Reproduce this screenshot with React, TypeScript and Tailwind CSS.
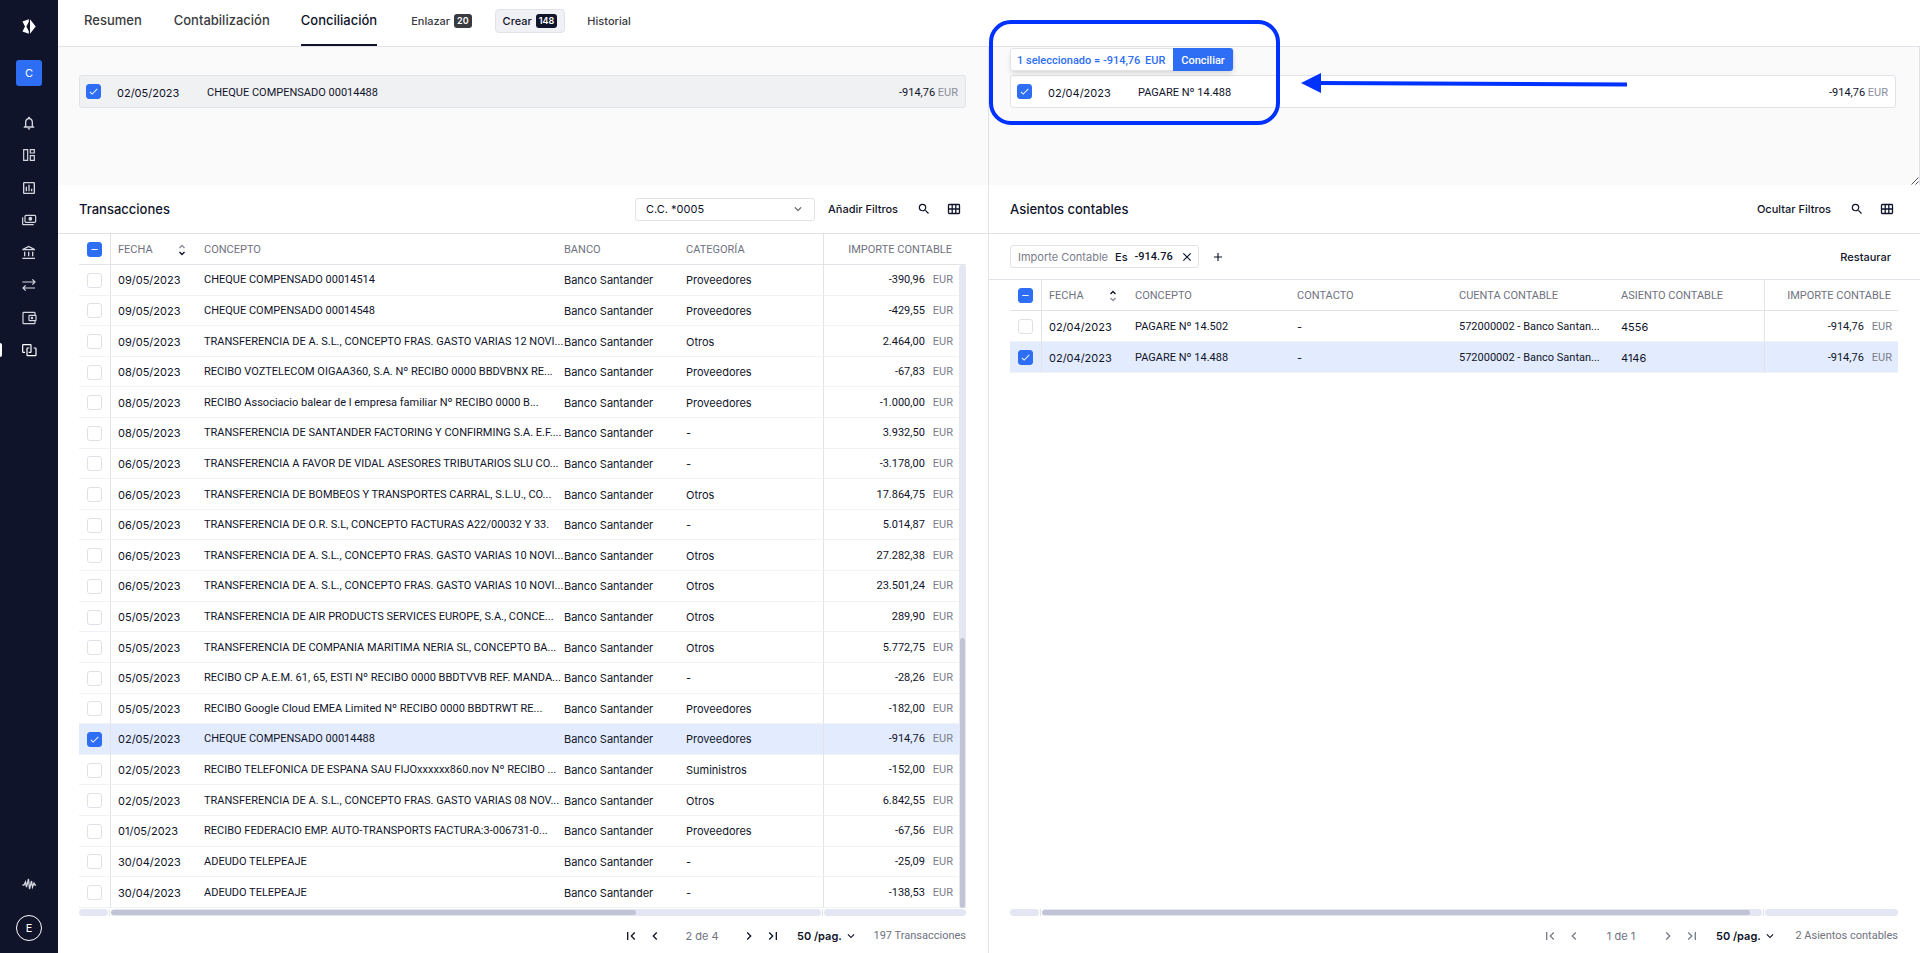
import type { ReactNode } from "react";
import {
  MdCheck,
  MdChevronLeft,
  MdChevronRight,
  MdClose,
  MdExpandMore,
  MdFirstPage,
  MdLastPage,
  MdNotificationsNone,
  MdOutlineAccountBalance,
  MdOutlineAssessment,
  MdAdd,
  MdRemove,
  MdSearch,
} from "react-icons/md";

type Transaction = {
  date: string;
  concept: string;
  category: string;
  amount: string;
  selected?: boolean;
};

const transactions: Transaction[] = [
  { date: "09/05/2023", concept: "CHEQUE COMPENSADO 00014514", category: "Proveedores", amount: "-390,96" },
  { date: "09/05/2023", concept: "CHEQUE COMPENSADO 00014548", category: "Proveedores", amount: "-429,55" },
  { date: "09/05/2023", concept: "TRANSFERENCIA DE A. S.L., CONCEPTO FRAS. GASTO VARIAS 12 NOVI...", category: "Otros", amount: "2.464,00" },
  { date: "08/05/2023", concept: "RECIBO VOZTELECOM OIGAA360, S.A. Nº RECIBO 0000 BBDVBNX RE...", category: "Proveedores", amount: "-67,83" },
  { date: "08/05/2023", concept: "RECIBO Associacio balear de l empresa familiar Nº RECIBO 0000 B...", category: "Proveedores", amount: "-1.000,00" },
  { date: "08/05/2023", concept: "TRANSFERENCIA DE SANTANDER FACTORING Y CONFIRMING S.A. E.F....", category: "-", amount: "3.932,50" },
  { date: "06/05/2023", concept: "TRANSFERENCIA A FAVOR DE VIDAL ASESORES TRIBUTARIOS SLU CO...", category: "-", amount: "-3.178,00" },
  { date: "06/05/2023", concept: "TRANSFERENCIA DE BOMBEOS Y TRANSPORTES CARRAL, S.L.U., CO...", category: "Otros", amount: "17.864,75" },
  { date: "06/05/2023", concept: "TRANSFERENCIA DE O.R. S.L, CONCEPTO FACTURAS A22/00032 Y 33.", category: "-", amount: "5.014,87" },
  { date: "06/05/2023", concept: "TRANSFERENCIA DE A. S.L., CONCEPTO FRAS. GASTO VARIAS 10 NOVI...", category: "Otros", amount: "27.282,38" },
  { date: "06/05/2023", concept: "TRANSFERENCIA DE A. S.L., CONCEPTO FRAS. GASTO VARIAS 10 NOVI...", category: "Otros", amount: "23.501,24" },
  { date: "05/05/2023", concept: "TRANSFERENCIA DE AIR PRODUCTS SERVICES EUROPE, S.A., CONCE...", category: "Otros", amount: "289,90" },
  { date: "05/05/2023", concept: "TRANSFERENCIA DE COMPANIA MARITIMA NERIA SL, CONCEPTO BA...", category: "Otros", amount: "5.772,75" },
  { date: "05/05/2023", concept: "RECIBO CP A.E.M. 61, 65, ESTI Nº RECIBO 0000 BBDTVVB REF. MANDA...", category: "-", amount: "-28,26" },
  { date: "05/05/2023", concept: "RECIBO Google Cloud EMEA Limited Nº RECIBO 0000 BBDTRWT RE...", category: "Proveedores", amount: "-182,00" },
  { date: "02/05/2023", concept: "CHEQUE COMPENSADO 00014488", category: "Proveedores", amount: "-914,76", selected: true },
  { date: "02/05/2023", concept: "RECIBO TELEFONICA DE ESPANA SAU FIJOxxxxxx860.nov Nº RECIBO ...", category: "Suministros", amount: "-152,00" },
  { date: "02/05/2023", concept: "TRANSFERENCIA DE A. S.L., CONCEPTO FRAS. GASTO VARIAS 08 NOV...", category: "Otros", amount: "6.842,55" },
  { date: "01/05/2023", concept: "RECIBO FEDERACIO EMP. AUTO-TRANSPORTS FACTURA:3-006731-0...", category: "Proveedores", amount: "-67,56" },
  { date: "30/04/2023", concept: "ADEUDO TELEPEAJE", category: "-", amount: "-25,09" },
  { date: "30/04/2023", concept: "ADEUDO TELEPEAJE", category: "-", amount: "-138,53" },
];

const entries = [
  { concept: "PAGARE Nº 14.502", entry: "4556", selected: false },
  { concept: "PAGARE Nº 14.488", entry: "4146", selected: true },
];

// Roboto sets capitals and figures narrower than Inter, so the dense columns use it
const dense = "font-['Roboto','Liberation_Sans',sans-serif]";
const th = `${dense} border-b border-[#e2e3e8] pt-0.5 pl-[7px] text-left font-normal text-[#6f7280]`;
const thCheck = "border-r border-b border-[#e2e3e8] pl-2";
const thAmount = `${dense} border-b border-l border-[#e2e3e8] pt-0.5 text-right font-normal text-[#6f7280]`;
const td = "border-b border-[#f1f2f5] pt-px pl-[7px] whitespace-nowrap";
const tdCheck = "border-r border-b border-r-[#e2e3e8] border-b-[#f1f2f5] pt-px pl-2";

function NavIcon({ children }: { children: ReactNode }) {
  return (
    <svg viewBox="0 0 24 24" className="h-4 w-4" fill="none" stroke="currentColor" strokeWidth="1.800">
      {children}
    </svg>
  );
}

function DashboardIcon() {
  return (
    <NavIcon>
      <path d="M4 4h6v16H4zM14 4h6v5h-6zM14 13h6v7h-6z" />
    </NavIcon>
  );
}

function PaymentsIcon() {
  return (
    <NavIcon>
      <rect x="6" y="5" width="16" height="10.500" rx="1.500" />
      <circle cx="14" cy="10.200" r="2" fill="currentColor" />
      <path d="M2.500 8v10a1 1 0 0 0 1 1H19" />
    </NavIcon>
  );
}

function SwapIcon() {
  return (
    <NavIcon>
      <path d="M2 7.500h18M17 3.500l4 4-4 4M21 16.500H4M7 12.500l-4 4 4 4" />
    </NavIcon>
  );
}

function WalletIcon() {
  return (
    <NavIcon>
      <path d="M21 8V4.500a1 1 0 0 0-1-1H4a1 1 0 0 0-1 1v15a1 1 0 0 0 1 1h16a1 1 0 0 0 1-1V16" />
      <rect x="12" y="8" width="10.500" height="8" rx="1" />
      <circle cx="16.500" cy="12" r="1" />
    </NavIcon>
  );
}

function ReconcileIcon() {
  return (
    <NavIcon>
      <path d="M6 15.500H3.500a1 1 0 0 1-1-1V5a1 1 0 0 1 1-1H14a1 1 0 0 1 1 1v9.500a1 1 0 0 1-1 1h-2.500" />
      <path d="M12.500 9H10a1 1 0 0 0-1 1v9.500a1 1 0 0 0 1 1h11.500a1 1 0 0 0 1-1V10a1 1 0 0 0-1-1H19" />
    </NavIcon>
  );
}

function TableIcon() {
  return (
    <svg viewBox="0 0 14 12" className="h-3 w-3.5" fill="none" stroke="currentColor" strokeWidth="1.300">
      <rect x="1.500" y="1.500" width="11" height="9" rx="0.800" />
      <path d="M1.500 6h11M5.200 1.500v9M8.800 1.500v9" />
    </svg>
  );
}

function SortIcon({ ascending }: { ascending?: boolean }) {
  return (
    <svg viewBox="0 0 8 12" className="mr-[11px] h-3 w-2" fill="none" strokeWidth="1.400">
      <path d="M1.500 4L4 1.500 6.500 4" className={ascending ? "stroke-[#10142a]" : "stroke-[#8a8d9a]"} />
      <path d="M1.500 8L4 10.500 6.500 8" className={ascending ? "stroke-[#8a8d9a]" : "stroke-[#10142a]"} />
    </svg>
  );
}

function Checkbox({ label, checked, mixed }: { label: string; checked?: boolean; mixed?: boolean }) {
  const on = checked || mixed;
  return (
    <span className="relative block h-[15px] w-[15px]">
      <input
        type="checkbox"
        aria-label={label}
        defaultChecked={on}
        className="block h-[15px] w-[15px] appearance-none rounded-[3px] border border-[#dfe1e7] bg-white checked:border-[#2d6ef5] checked:bg-[#2d6ef5]"
      />
      {checked && <MdCheck className="pointer-events-none absolute inset-0.5 h-[11px] w-[11px] text-white" />}
      {mixed && <MdRemove className="pointer-events-none absolute inset-0.5 h-[11px] w-[11px] text-white" />}
    </span>
  );
}

function Sidebar() {
  return (
    <aside className="flex w-[58px] shrink-0 flex-col items-center bg-[#10142a] pt-[19px] pb-3 text-[#d5d7e0]">
      <svg viewBox="0 0 14 15" className="h-[15px] w-3.5 fill-white">
        <path d="M8 0.300L13.700 7.500 8 14.700z" />
        <path d="M6.800 0.300v2.400L4.400 7.500l2.400 4.800v2.400L0.500 12.600 3 7.500 0.500 2.400z" />
      </svg>
      <button className="mt-[26px] h-[26px] w-[26px] rounded-[3px] bg-[#2d6ef5] text-[11px] text-white">C</button>
      <nav className="mt-[29px] flex h-[243px] w-full flex-col items-center justify-between">
        <a href="#avisos" aria-label="Avisos"><MdNotificationsNone className="h-4 w-4" /></a>
        <a href="#panel" aria-label="Panel"><DashboardIcon /></a>
        <a href="#informes" aria-label="Informes"><MdOutlineAssessment className="h-4 w-4" /></a>
        <a href="#pagos" aria-label="Pagos"><PaymentsIcon /></a>
        <a href="#bancos" aria-label="Bancos"><MdOutlineAccountBalance className="h-4 w-4" /></a>
        <a href="#movimientos" aria-label="Movimientos"><SwapIcon /></a>
        <a href="#cartera" aria-label="Cartera"><WalletIcon /></a>
        <a href="#conciliacion" aria-label="Conciliación" className="flex w-full items-center text-white">
          <span className="h-3.5 w-0.5 rounded-r bg-white" />
          <span className="ml-[19px]"><ReconcileIcon /></span>
        </a>
      </nav>
      <a href="#actividad" aria-label="Actividad" className="mt-auto">
        <svg viewBox="0 0 14 12" className="h-3 w-3.5" fill="none" stroke="currentColor" strokeWidth="1.300">
          <path d="M0.500 7h1.500l1.500-3 1 5 2-8 1 10 2-8 1 6 1.500-4 1 2h1" />
        </svg>
      </a>
      <button className="mt-[25px] h-[26px] w-[26px] rounded-full border border-white text-[11px] text-white">E</button>
    </aside>
  );
}

function Header() {
  return (
    <header className="flex h-[47px] shrink-0 items-stretch border-b border-[#e2e3e8] pl-[26px] text-[13px] font-medium text-[#3a3b40]">
      <a href="#resumen" className="mr-8 pt-3">Resumen</a>
      <a href="#contabilizacion" className="mr-[31px] pt-3">Contabilización</a>
      <a href="#conciliacion" className="mr-[27px] border-b-2 border-[#10142a] pt-3 text-[#10142a]">
        Conciliación
      </a>
      <div className="flex h-[42px] items-center text-[11px]">
        <a href="#enlazar" className="flex h-6 items-center gap-1 px-[7px]">
          Enlazar
          <span className="rounded-[3px] bg-[#3a3b40] px-[3px] text-[9px] leading-[14px] font-semibold text-white">20</span>
        </a>
        <a
          href="#crear"
          className="ml-4 flex h-6 items-center gap-1 rounded border border-[#e2e3e8] bg-[#f0f1f4] px-[7px] text-[#10142a]"
        >
          Crear
          <span className="rounded-[3px] bg-[#10142a] px-[3px] text-[9px] leading-[14px] font-semibold text-white">148</span>
        </a>
        <a href="#historial" className="ml-[15px] px-[7px]">Historial</a>
      </div>
    </header>
  );
}

function SelectedCard({ date, concept, className }: { date: string; concept: string; className: string }) {
  return (
    <div className={`flex h-[33px] items-center rounded-[3px] border border-[#e2e3e8] pr-[7px] pl-1.5 ${className}`}>
      <Checkbox label={concept} checked />
      <span className="ml-4 w-[90px] pt-0.5">{date}</span>
      <span className={`flex-1 pt-0.5 ${dense}`}>{concept}</span>
      <span className={`pt-0.5 ${dense}`}>
        -914,76 <span className="text-[#8a8d9a]">EUR</span>
      </span>
    </div>
  );
}

function Amount({ value }: { value: string }) {
  return (
    <>
      {value}
      <span className="ml-2 text-[#7a7d8a]">EUR</span>
    </>
  );
}

function Toolbar() {
  return (
    <>
      <button aria-label="Buscar" className="ml-[19px]"><MdSearch className="h-3.5 w-3.5" /></button>
      <button aria-label="Columnas" className="ml-4"><TableIcon /></button>
    </>
  );
}

function ScrollTrack({ thumb, last }: { thumb: string; last: string }) {
  return (
    <div className="mt-px flex h-[7px] shrink-0 gap-px">
      <div className="w-[29px] rounded-full bg-[#e4e6f3]" />
      <div className="w-px bg-[#e2e3e8]" />
      <div className="flex-1 rounded-full bg-[#e4e6f3] py-px">
        <div className={`h-full rounded-full bg-[#c0c4d4] ${thumb}`} />
      </div>
      <div className="w-px bg-[#e2e3e8]" />
      <div className={`rounded-full bg-[#e4e6f3] ${last}`} />
    </div>
  );
}

function Pager({ page, total, totalWidth, disabled }: { page: string; total: string; totalWidth: string; disabled?: boolean }) {
  return (
    <div className="flex h-[37px] shrink-0 items-center justify-end pt-0.5">
      <div className={`flex items-center ${disabled ? "text-[#7a7d8a]" : ""}`}>
        <button aria-label="Primera página" disabled={disabled}><MdFirstPage className="h-4 w-4" /></button>
        <button aria-label="Página anterior" disabled={disabled} className="ml-2"><MdChevronLeft className="h-4 w-4" /></button>
        <span className="w-[78px] text-center text-[#6f7280]">{page}</span>
        <button aria-label="Página siguiente" disabled={disabled}><MdChevronRight className="h-4 w-4" /></button>
        <button aria-label="Última página" disabled={disabled} className="ml-2"><MdLastPage className="h-4 w-4" /></button>
      </div>
      <div className="relative ml-4 flex items-center">
        <select aria-label="Filas por página" className="w-[61px] appearance-none bg-transparent font-semibold">
          <option>50 /pag.</option>
        </select>
        <MdExpandMore className="pointer-events-none absolute right-0 h-3.5 w-3.5" />
      </div>
      <span className={`text-right whitespace-nowrap text-[#6f7280] ${dense} ${totalWidth}`}>{total}</span>
    </div>
  );
}

function TransactionsPanel() {
  return (
    <section className="flex min-w-0 flex-col border-r border-[#e2e3e8]">
      <div className="h-[138px] shrink-0 bg-[#fafafa] pt-7 pr-[22px] pl-[21px]">
        <SelectedCard date="02/05/2023" concept="CHEQUE COMPENSADO 00014488" className="bg-[#f0f1f3]" />
      </div>
      <div className="flex h-[49px] shrink-0 items-center border-b border-[#e2e3e8] pr-[27px] pl-[21px]">
        <h2 className="flex-1 text-[13px] font-medium">Transacciones</h2>
        <div className="relative flex items-center">
          <select
            aria-label="Cuenta"
            className="h-[23px] w-[180px] appearance-none rounded-[3px] border border-[#e2e3e8] bg-white pl-2.5"
          >
            <option>C.C. *0005</option>
          </select>
          <MdExpandMore className="pointer-events-none absolute right-2.5 h-3.5 w-3.5 text-[#55575f]" />
        </div>
        <button className="ml-[13px] font-medium">Añadir Filtros</button>
        <Toolbar />
      </div>
      <div className="flex min-h-0 flex-1 flex-col pr-[22px] pl-[21px]">
        <div className="relative min-h-0 flex-1">
          <table className="h-full w-full table-fixed border-separate border-spacing-0">
            <colgroup>
              <col className="w-8" />
              <col className="w-[86px]" />
              <col />
              <col className="w-[122px]" />
              <col className="w-[144px]" />
              <col className="w-[143px]" />
            </colgroup>
            <thead>
              <tr className="h-[31px]">
                <th className={thCheck}><Checkbox label="Seleccionar todo" mixed /></th>
                <th className={th}><span className="flex items-center justify-between">FECHA <SortIcon /></span></th>
                <th className={th}>CONCEPTO</th>
                <th className={th}>BANCO</th>
                <th className={th}>CATEGORÍA</th>
                <th className={`${thAmount} pr-3.5`}>IMPORTE CONTABLE</th>
              </tr>
            </thead>
            <tbody>
              {transactions.map((row, i) => (
                <tr key={i} className={row.selected ? "bg-[#e3ecfe]" : ""}>
                  <td className={tdCheck}><Checkbox label={row.concept} checked={row.selected} /></td>
                  <td className={td}>{row.date}</td>
                  <td className={`${td} ${dense}`}>{row.concept}</td>
                  <td className={td}>Banco Santander</td>
                  <td className={td}>{row.category}</td>
                  <td className={`${td} ${dense} border-l border-l-[#e2e3e8] pr-[13px] text-right`}>
                    <Amount value={row.amount} />
                  </td>
                </tr>
              ))}
            </tbody>
          </table>
          <div className="absolute top-[31px] right-0 bottom-0 flex w-[7px] items-end rounded-full bg-[#e4e6f3] px-px">
            <div className="h-[42%] w-full rounded-full bg-[#c0c4d4]" />
          </div>
        </div>
        <ScrollTrack thumb="w-[74%]" last="w-[142px]" />
        <Pager page="2 de 4" total="197 Transacciones" totalWidth="w-[108px]" />
      </div>
    </section>
  );
}

function EntriesPanel() {
  return (
    <section className="flex min-w-0 flex-col">
      <div className="relative h-[138px] shrink-0 border-r border-[#e2e3e8] bg-[#fafafa] pt-7 pr-[23px] pl-[21px]">
        <SelectedCard date="02/04/2023" concept="PAGARE Nº 14.488" className="bg-white" />
        <div className={`absolute top-px left-[21px] flex h-[23px] items-center rounded-[3px] border border-[#e2e3e8] bg-white font-medium text-[#2d6ef5] shadow-md ${dense}`}>
          <span className="w-[162px] pt-0.5 pl-1.5 whitespace-nowrap">
            1 seleccionado = -914,76 <span className="ml-0.5">EUR</span>
          </span>
          <button className="h-[23px] w-[60px] rounded-r-[3px] bg-[#2d6ef5] pt-0.5 text-white">Conciliar</button>
        </div>
        <svg viewBox="0 0 8 8" className="absolute right-0 bottom-0 h-2 w-2 stroke-[#55575f]" strokeWidth="1">
          <path d="M0.500 7.500l7-7M4.500 7.500l3-3" />
        </svg>
      </div>
      <div className="flex h-[49px] shrink-0 items-center border-b border-[#e2e3e8] pr-[26px] pl-[21px]">
        <h2 className="flex-1 text-[13px] font-medium">Asientos contables</h2>
        <button className="font-medium">Ocultar Filtros</button>
        <Toolbar />
      </div>
      <div className="flex h-[46px] shrink-0 items-center border-b border-[#e2e3e8] pr-[29px] pl-[21px]">
        <div className="flex h-[23px] items-center gap-[7px] rounded-[3px] border border-[#e2e3e8] pr-1 pl-[7px] whitespace-nowrap">
          <span className="text-[#7a7d8a]">Importe Contable</span>
          <span className="font-medium">Es</span>
          <span className={`font-medium ${dense}`}>-914.76</span>
          <button aria-label="Quitar filtro"><MdClose className="h-3.5 w-3.5" /></button>
        </div>
        <button aria-label="Añadir filtro" className="ml-3"><MdAdd className="h-3.5 w-3.5" /></button>
        <button className="ml-auto font-medium">Restaurar</button>
      </div>
      <div className="flex min-h-0 flex-1 flex-col pr-[22px] pl-[21px]">
        <div className="min-h-0 flex-1">
          <table className="w-full table-fixed border-separate border-spacing-0">
            <colgroup>
              <col className="w-8" />
              <col className="w-[86px]" />
              <col />
              <col className="w-[162px]" />
              <col className="w-[162px]" />
              <col className="w-[150px]" />
              <col className="w-[134px]" />
            </colgroup>
            <thead>
              <tr className="h-[31px]">
                <th className={thCheck}><Checkbox label="Seleccionar todo" mixed /></th>
                <th className={th}><span className="flex items-center justify-between">FECHA <SortIcon ascending /></span></th>
                <th className={th}>CONCEPTO</th>
                <th className={th}>CONTACTO</th>
                <th className={th}>CUENTA CONTABLE</th>
                <th className={th}>ASIENTO CONTABLE</th>
                <th className={`${thAmount} pr-[7px]`}>IMPORTE CONTABLE</th>
              </tr>
            </thead>
            <tbody>
              {entries.map((row) => (
                <tr key={row.entry} className={row.selected ? "h-[31px] bg-[#e3ecfe]" : "h-[31px]"}>
                  <td className={tdCheck}><Checkbox label={row.concept} checked={row.selected} /></td>
                  <td className={td}>02/04/2023</td>
                  <td className={`${td} ${dense}`}>{row.concept}</td>
                  <td className={td}>-</td>
                  <td className={`${td} ${dense}`}>572000002 - Banco Santan...</td>
                  <td className={td}>{row.entry}</td>
                  <td className={`${td} ${dense} border-l border-l-[#e2e3e8] pr-1.5 text-right`}>
                    <Amount value="-914,76" />
                  </td>
                </tr>
              ))}
            </tbody>
          </table>
        </div>
        <ScrollTrack thumb="mr-3" last="w-[133px]" />
        <Pager page="1 de 1" total="2 Asientos contables" totalWidth="w-[121px]" disabled />
      </div>
    </section>
  );
}

function Callout() {
  return (
    <div className="pointer-events-none absolute top-5 left-1/2 flex items-center">
      <div className="h-[105px] w-[291px] rounded-[22px] border-4 border-[#0032ff]" />
      <svg viewBox="0 0 326 20" className="mt-[21px] ml-[21px] h-5 w-[326px]">
        <path d="M18 10L326 11.500" className="stroke-[#0032ff]" strokeWidth="4" />
        <path d="M0 10L20 0v20z" className="fill-[#0032ff]" />
      </svg>
    </div>
  );
}

export default function App() {
  return (
    <div className="flex h-screen min-h-[900px] bg-white font-['Inter','Liberation_Sans',sans-serif] text-[11px] leading-4 text-[#10142a]">
      <Sidebar />
      <div className="relative flex min-w-0 flex-1 flex-col">
        <Header />
        <main className="grid min-h-0 flex-1 grid-cols-2">
          <TransactionsPanel />
          <EntriesPanel />
        </main>
        <Callout />
      </div>
    </div>
  );
}
